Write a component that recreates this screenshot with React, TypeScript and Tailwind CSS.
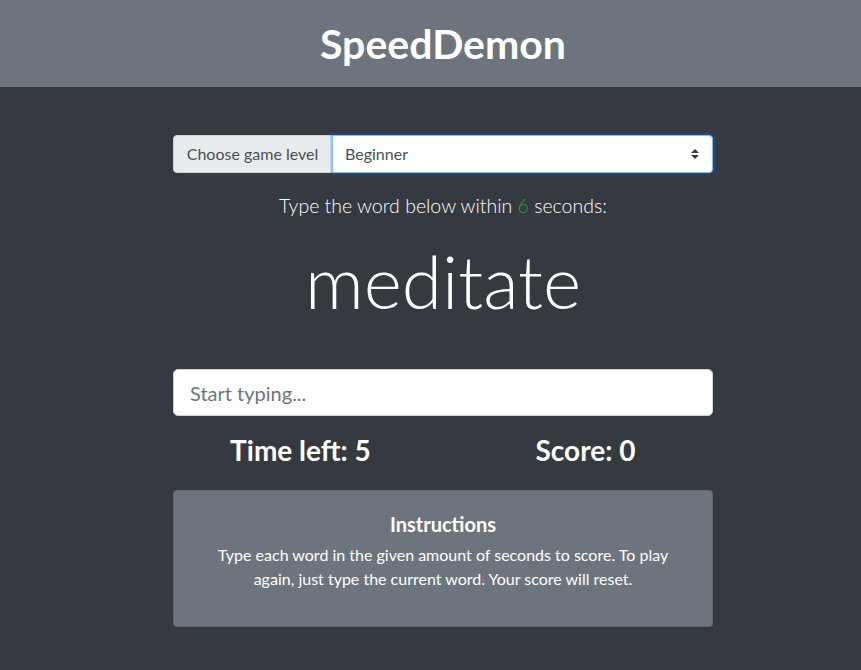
import { useState } from "react";

const font = "font-['Lato','Open_Sans',sans-serif]";

function LevelSelect() {
  const [level, setLevel] = useState("Beginner");
  return (
    <div className="flex h-[38px] w-full">
      <label
        htmlFor="level"
        className="flex w-[159px] items-center justify-center rounded-l-[4px] border border-[#ced4da] bg-[#e9ecef] text-[16px] text-[#495057]"
      >
        Choose game level
      </label>
      <div className="relative flex-1">
        <select
          id="level"
          value={level}
          onChange={(e) => setLevel(e.target.value)}
          className="h-full w-full appearance-none rounded-r-[4px] border border-[#80bdff] bg-white pl-3 pr-8 text-[16px] text-[#495057] shadow-[0_0_0_2px_rgba(0,123,255,0.2)] outline-none"
        >
          <option>Beginner</option>
          <option>Intermediate</option>
          <option>Advanced</option>
        </select>
        <svg
          viewBox="0 0 4 5"
          className="pointer-events-none absolute right-[14px] top-1/2 h-[10px] w-[8px] -translate-y-1/2"
        >
          <path d="M2 0L0 2h4zm0 5L0 3h4z" fill="#343a40" />
        </svg>
      </div>
    </div>
  );
}

export default function App() {
  return (
    <div className={`${font} min-h-[670px] bg-[#343a40] text-white`}>
      <header className="flex h-[87px] items-center justify-center bg-[#6c757d] pl-[25px]">
        <h1 className="text-[41px] font-bold leading-[1.2]">SpeedDemon</h1>
      </header>

      <main className="ml-[173px] w-[540px] pt-12 text-center">
        <LevelSelect />

        <p className="mt-[18px] text-[19.5px] font-light leading-[30px]">
          Type the word below within{" "}
          <span className="text-[#28a745]">6</span> seconds:
        </p>

        <h2 className="mt-[7px] text-[73px] font-light leading-[106px]">meditate</h2>

        <input
          type="text"
          placeholder="Start typing..."
          className="mt-[35px] h-[47px] w-full rounded-[5px] border border-[#ced4da] bg-white px-4 text-[20px] text-[#495057] outline-none placeholder:text-[#6c757d]"
        />

        <div className="mt-[17px] grid grid-cols-2 gap-[30px]">
          <h3 className="text-[28px] font-bold leading-[34px]">Time left: 5</h3>
          <h3 className="text-[28px] font-bold leading-[34px]">Score: 0</h3>
        </div>

        <div className="mt-[23px] rounded-[4px] border border-black/[0.125] bg-[#6c757d] px-5 pb-[19px] pt-[21px]">
          <h5 className="text-[20px] font-bold leading-[24px]">Instructions</h5>
          <p className="mx-auto mb-4 mt-[7px] max-w-[470px] text-[16px] leading-[24px]">
            Type each word in the given amount of seconds to score. To play
            again, just type the current word. Your score will reset.
          </p>
        </div>
      </main>
    </div>
  );
}
